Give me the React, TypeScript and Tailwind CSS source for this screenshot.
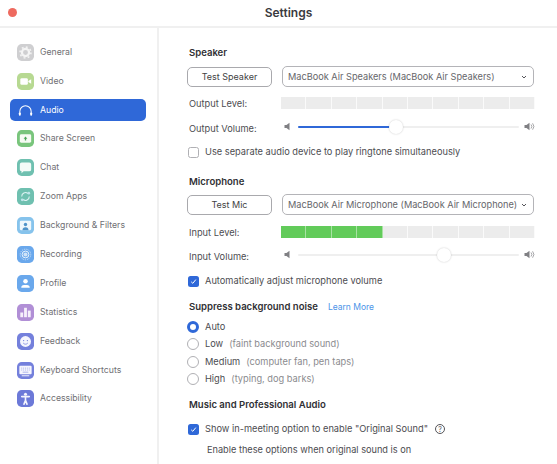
import React from "react";

const font = { fontFamily: '"Inter", "Helvetica Neue", Arial, sans-serif' };

function IconBox({ bg, children }: { bg: string; children: React.ReactNode }) {
  return (
    <svg width="17" height="17" viewBox="0 0 18 18" className="shrink-0">
      <rect x="0" y="0" width="18" height="18" rx="5" fill={bg} />
      {children}
    </svg>
  );
}

const navItems: { label: string; icon: React.ReactNode }[] = [
  {
    label: "General",
    icon: (
      <IconBox bg="#cfcfd1">
        <circle cx="9" cy="9" r="3.8" fill="none" stroke="#f4f4f4" strokeWidth="2.4" />
        <circle cx="9" cy="9" r="5.8" fill="none" stroke="#f4f4f4" strokeWidth="1.6" strokeDasharray="2 2.5" />
      </IconBox>
    ),
  },
  {
    label: "Video",
    icon: (
      <IconBox bg="#b7d992">
        <rect x="3.5" y="5.5" width="8" height="7" rx="1.5" fill="#fff" />
        <path d="M12 8.5 L15 6.5 V11.5 L12 9.5 Z" fill="#fff" />
      </IconBox>
    ),
  },
  {
    label: "Audio",
    icon: (
      <svg width="17" height="17" viewBox="0 0 18 18" className="shrink-0">
        <path d="M3 13 V10 a6 6 0 0 1 12 0 V13" fill="none" stroke="#fff" strokeWidth="1.1" />
        <rect x="2" y="11" width="2" height="3.5" rx="1" fill="#fff" />
        <rect x="14" y="11" width="2" height="3.5" rx="1" fill="#fff" />
      </svg>
    ),
  },
  {
    label: "Share Screen",
    icon: (
      <IconBox bg="#79c57c">
        <rect x="3" y="4.5" width="12" height="9" rx="1.5" fill="#f6fbf3" />
        <path d="M9 7 L11 9.3 H9.7 V11 H8.3 V9.3 H7 Z" fill="#4aa657" />
      </IconBox>
    ),
  },
  {
    label: "Chat",
    icon: (
      <IconBox bg="#6fc0b0">
        <path d="M5 3.8 H13 a2 2 0 0 1 2 2 V11 a2 2 0 0 1 -2 2 H7 L4.8 15 V13 a2 2 0 0 1 -1.8 -2 V5.8 a2 2 0 0 1 2 -2 Z" fill="#f3fbf8" />
      </IconBox>
    ),
  },
  {
    label: "Zoom Apps",
    icon: (
      <IconBox bg="#6fc0b0">
        <path d="M5 9 a4 4 0 0 1 6.5 -3.2 M13 9 a4 4 0 0 1 -6.5 3.2" fill="none" stroke="#dff3f3" strokeWidth="1.1" />
        <circle cx="12.5" cy="5.5" r="1.4" fill="#bfe5ec" />
        <circle cx="5.5" cy="12.5" r="1.4" fill="#bfe5ec" />
      </IconBox>
    ),
  },
  {
    label: "Background & Filters",
    icon: (
      <IconBox bg="#86c3ec">
        <rect x="3" y="4" width="12" height="10" rx="1.2" fill="#eef7fc" />
        <circle cx="9" cy="8" r="1.8" fill="#4f93c9" />
        <path d="M5.8 14 a3.2 3.2 0 0 1 6.4 0 Z" fill="#4f93c9" />
      </IconBox>
    ),
  },
  {
    label: "Recording",
    icon: (
      <IconBox bg="#6aa8ec">
        <circle cx="9" cy="9" r="5.6" fill="none" stroke="#d6e8fa" strokeWidth="1" strokeDasharray="1 1" />
        <circle cx="9" cy="9" r="3.6" fill="none" stroke="#eef6fd" strokeWidth="1" />
        <circle cx="9" cy="9" r="2.2" fill="#cfe3f8" />
      </IconBox>
    ),
  },
  {
    label: "Profile",
    icon: (
      <IconBox bg="#6aa8ec">
        <circle cx="9" cy="6.6" r="2.4" fill="#fff" />
        <path d="M4.5 13.5 a3 3 0 0 1 3 -3 h3 a3 3 0 0 1 3 3 Z" fill="#fff" />
      </IconBox>
    ),
  },
  {
    label: "Statistics",
    icon: (
      <IconBox bg="#b18fd6">
        <rect x="3.5" y="9" width="3" height="5" fill="#f6f0fb" />
        <rect x="7.5" y="4" width="3" height="10" fill="#f6f0fb" />
        <rect x="11.5" y="7" width="3" height="7" fill="#f6f0fb" />
      </IconBox>
    ),
  },
  {
    label: "Feedback",
    icon: (
      <IconBox bg="#7480dc">
        <circle cx="9" cy="9" r="5.8" fill="#f5f5fd" />
        <circle cx="7" cy="8" r=".7" fill="#7480dc" />
        <circle cx="11" cy="8" r=".7" fill="#7480dc" />
        <path d="M6.5 10.5 a3 3 0 0 0 5 0" fill="none" stroke="#7480dc" strokeWidth=".8" />
      </IconBox>
    ),
  },
  {
    label: "Keyboard Shortcuts",
    icon: (
      <IconBox bg="#7480dc">
        <rect x="2.5" y="4" width="13" height="9" rx="1" fill="#f5f5fd" />
        <path d="M4.5 6.5 H13.5 M4.5 8.5 H13.5" stroke="#a9b0ea" strokeWidth="1" strokeDasharray="1 1" />
        <path d="M6 10.8 H12" stroke="#a9b0ea" strokeWidth="1" />
        <path d="M5 14.6 H13" stroke="#f5f5fd" strokeWidth="1" />
      </IconBox>
    ),
  },
  {
    label: "Accessibility",
    icon: (
      <IconBox bg="#6c79d8">
        <circle cx="9" cy="4.6" r="1.6" fill="#f5f5fd" />
        <path d="M5 7 L13 7 M9 7 V11 M9 11 L7.4 15 M9 11 L10.6 15" stroke="#f5f5fd" strokeWidth="1.7" fill="none" strokeLinecap="round" />
      </IconBox>
    ),
  },
];

function Sidebar() {
  return (
    <aside className="w-[159px] shrink-0 border-r-2 border-[#f0f0f0] pt-[13.5px] pl-[10px] pr-[11px]">
      <div className="flex flex-col gap-[7.4px]">
        {navItems.map((item) => {
          const active = item.label === "Audio";
          return (
            <div
              key={item.label}
              className={
                "flex h-[21.5px] items-center gap-[6px] rounded-[5px] pl-[7px] text-[8.7px] " +
                (active ? "bg-[#2f68d8] text-white" : "text-[#6f6f73]")
              }
            >
              {item.icon}
              <span>{item.label}</span>
            </div>
          );
        })}
      </div>
    </aside>
  );
}

function Heading({ children }: { children: React.ReactNode }) {
  return <div className="pl-[2px] text-[9.55px] font-semibold leading-[12px] text-[#303034]">{children}</div>;
}

function Test({ children }: { children: React.ReactNode }) {
  return (
    <div className="flex h-[20px] w-[85px] shrink-0 items-center justify-center rounded-[5px] border border-[#a9a9ad] bg-white text-[9px] text-[#3f3f43]">
      {children}
    </div>
  );
}

function Select({ children }: { children: React.ReactNode }) {
  return (
    <div className="ml-[10px] flex h-[21px] w-[252px] items-center justify-between rounded-[5px] border border-[#b4b4b8] bg-white pl-[5px] pr-[6px] text-[9.2px] text-[#66666a]">
      <span className="whitespace-nowrap">{children}</span>
      <svg width="6" height="4" viewBox="0 0 6 4" className="shrink-0">
        <path d="M1 1 L3 3 L5 1" fill="none" stroke="#55555a" strokeWidth="1" />
      </svg>
    </div>
  );
}

function Level({ on }: { on: number }) {
  return (
    <div className="mb-[2px] flex h-[12px] w-[254px]">
      {Array.from({ length: 10 }).map((_, i) => (
        <div
          key={i}
          className={
            "flex-1 border-r " +
            (i < on ? "border-[#a8e2a3] bg-[#62cb5a]" : "border-[#fafafa] bg-[#ececec]")
          }
        />
      ))}
    </div>
  );
}

function Speaker({ loud }: { loud?: boolean }) {
  return (
    <svg width="11" height="9" viewBox="0 0 11 9" className="shrink-0">
      <path d="M0.5 3 H2.5 L5.5 0.8 V8.2 L2.5 6 H0.5 Z" fill="#808084" />
      {loud && (
        <path d="M7 2.5 a3 3 0 0 1 0 4 M8.6 1.3 a5 5 0 0 1 0 6.4" fill="none" stroke="#808084" strokeWidth=".7" />
      )}
    </svg>
  );
}

function Slider({ pct, fill }: { pct: number; fill?: boolean }) {
  return (
    <div className="mb-[5px] flex w-[254px] items-center pl-[3px]">
      <Speaker />
      <div className="relative ml-[3px] mr-[5px] h-[2px] flex-1 rounded-full bg-[#efefef]">
        {fill && <div className="h-full rounded-full bg-[#2f68d8]" style={{ width: `${pct}%` }} />}
        <div
          className="absolute top-1/2 h-[14px] w-[14px] -translate-x-1/2 -translate-y-1/2 rounded-full bg-white shadow-[0_0_2px_rgba(0,0,0,0.22)]"
          style={{ left: `${pct}%` }}
        />
      </div>
      <Speaker loud />
    </div>
  );
}

function Row({ label, children }: { label: string; children: React.ReactNode }) {
  return (
    <div className="flex items-center pl-[2px]">
      <div className="w-[92px] shrink-0 text-[9.25px] text-[#4c4c50]">{label}</div>
      {children}
    </div>
  );
}

function Check({ on, children }: { on?: boolean; children: React.ReactNode }) {
  return (
    <div className="flex h-[12px] items-center gap-[6px] pl-px text-[9.25px] text-[#4c4c50]">
      <div
        className={
          "flex h-[11px] w-[11px] items-center justify-center rounded-[2.5px] " +
          (on ? "bg-[#2f68d8]" : "border border-[#b0b0b4] bg-white")
        }
      >
        {on && (
          <svg width="7" height="7" viewBox="0 0 7 7">
            <path d="M1.2 3.8 L2.8 5.3 L5.8 1.6" fill="none" stroke="#fff" strokeWidth="1" />
          </svg>
        )}
      </div>
      <span className="whitespace-nowrap">{children}</span>
    </div>
  );
}

function Radio({ on, label, note }: { on?: boolean; label: string; note?: string }) {
  return (
    <div className="flex h-[12px] items-center text-[9.25px]">
      <div
        className={
          "mr-[6px] h-[12px] w-[12px] rounded-full bg-white " +
          (on ? "border-[3px] border-[#2f68d8]" : "border border-[#b0b0b4]")
        }
      />
      <span className="text-[#4c4c50]">{label}</span>
      {note && <span className="ml-[6px] text-[#8a8a8e]">{note}</span>}
    </div>
  );
}

export default function App() {
  return (
    <div className="flex h-[464px] w-[557px] flex-col overflow-hidden bg-white" style={font}>
      <header className="relative flex h-[28px] shrink-0 items-center justify-center border-b-2 border-[#f0f0f0] pl-[20px]">
        <div className="absolute left-[8px] top-[8px] h-[9px] w-[9px] rounded-full bg-[#ee6a5f]" />
        <span className="text-[12px] font-semibold text-[#3a3a3e]">Settings</span>
      </header>
      <div className="flex min-h-0 flex-1">
        <Sidebar />
        <main className="min-w-0 flex-1 pl-[28px] pt-[19px]">
          <Heading>Speaker</Heading>
          <div className="mt-[7px] flex items-center">
            <Test>Test Speaker</Test>
            <Select>MacBook Air Speakers (MacBook Air Speakers)</Select>
          </div>
          <div className="mt-[10px]">
            <Row label="Output Level:">
              <Level on={0} />
            </Row>
          </div>
          <div className="mt-[11px]">
            <Row label="Output Volume:">
              <Slider pct={44.3} fill />
            </Row>
          </div>
          <div className="mt-[10px]">
            <Check>Use separate audio device to play ringtone simultaneously</Check>
          </div>

          <div className="mt-[18px]">
            <Heading>Microphone</Heading>
          </div>
          <div className="mt-[6px] flex items-center">
            <Test>Test Mic</Test>
            <Select>MacBook Air Microphone (MacBook Air Microphone)</Select>
          </div>
          <div className="mt-[11px]">
            <Row label="Input Level:">
              <Level on={4} />
            </Row>
          </div>
          <div className="mt-[10px]">
            <Row label="Input Volume:">
              <Slider pct={66} />
            </Row>
          </div>
          <div className="mt-[11px]">
            <Check on>Automatically adjust microphone volume</Check>
          </div>

          <div className="mt-[14px] flex items-center">
            <Heading>Suppress background noise</Heading>
            <span className="ml-[10px] text-[8.5px] text-[#4c94e8]">Learn More</span>
          </div>
          <div className="mt-[7px] flex flex-col gap-[5.5px]">
            <Radio on label="Auto" />
            <Radio label="Low" note="(faint background sound)" />
            <Radio label="Medium" note="(computer fan, pen taps)" />
            <Radio label="High" note="(typing, dog barks)" />
          </div>
          <div className="mt-[14px]">
            <Heading>Music and Professional Audio</Heading>
          </div>
          <div className="mt-[12px] flex items-center">
            <Check on>Show in-meeting option to enable "Original Sound"</Check>
            <div className="ml-[7px] flex h-[10px] w-[10px] items-center justify-center rounded-full border border-[#55555a] text-[7px] leading-none text-[#55555a]">?</div>
          </div>
          <div className="mt-[8px] pl-[20px] text-[9.2px] text-[#4c4c50]">Enable these options when original sound is on</div>
        </main>
      </div>
    </div>
  );
}
